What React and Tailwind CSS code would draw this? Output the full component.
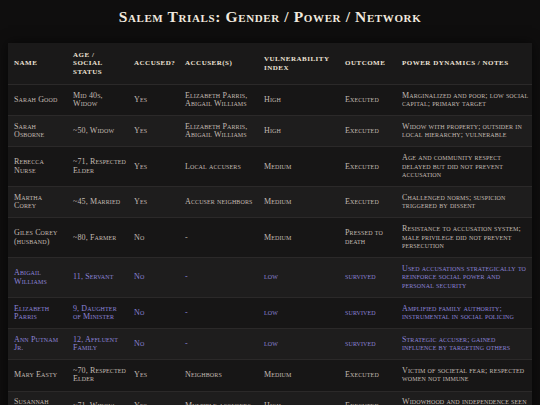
const rows = [
  ["Sarah Good", "Mid 40s, Widow", "Yes", "Elizabeth Parris, Abigail Williams", "High", "Executed", "Marginalized and poor; low social capital; primary target"],
  ["Sarah Osborne", "~50, Widow", "Yes", "Elizabeth Parris, Abigail Williams", "High", "Executed", "Widow with property; outsider in local hierarchy; vulnerable"],
  ["Rebecca Nurse", "~71, Respected Elder", "Yes", "Local accusers", "Medium", "Executed", "Age and community respect delayed but did not prevent accusation"],
  ["Martha Corey", "~45, Married", "Yes", "Accuser neighbors", "Medium", "Executed", "Challenged norms; suspicion triggered by dissent"],
  ["Giles Corey (husband)", "~80, Farmer", "No", "-", "Medium", "Pressed to death", "Resistance to accusation system; male privilege did not prevent persecution"],
  ["Abigail Williams", "11, Servant", "No", "-", "low", "survived", "Used accusations strategically to reinforce social power and personal security", true],
  ["Elizabeth Parris", "9, Daughter of Minister", "No", "-", "low", "survived", "Amplified family authority; instrumental in social policing", true],
  ["Ann Putnam Jr.", "12, Affluent Family", "No", "-", "low", "survived", "Strategic accuser; gained influence by targeting others", true],
  ["Mary Easty", "~70, Respected Elder", "Yes", "Neighbors", "Medium", "Executed", "Victim of societal fear; respected women not immune"],
  ["Susannah Martin", "~71, Widow", "Yes", "Multiple accusers", "High", "Executed", "Widowhood and independence seen as threat to order"],
];

const headers = ["Name", "Age / Social Status", "Accused?", "Accuser(s)", "Vulnerability Index", "Outcome", "Power Dynamics / Notes"];
const widths = ["w-[59px]", "w-[61px]", "w-[51px]", "w-[79px]", "w-[81px]", "w-[57px]", "w-[136px]"];

export default function App() {
  return (
    <div className="w-[540px] h-[405px] overflow-hidden bg-[#0f0e0e] px-2 font-['Liberation_Serif',serif]">
      <h1 className="h-[34px] mb-[9px] flex items-center justify-center text-[15.5px] font-bold tracking-[0.04em] text-[#f1e9df] [font-variant-caps:small-caps]">
        Salem Trials: Gender / Power / Network
      </h1>
      <table className="w-[524px] table-fixed border-collapse bg-[#1a1919] shadow-[0_0_12px_rgba(0,0,0,0.6)]">
        <colgroup>
          {widths.map((w, i) => (
            <col key={i} className={w} />
          ))}
        </colgroup>
        <thead>
          <tr className="border-b border-[#2b2929] bg-[#1a1919]">
            {headers.map((h) => (
              <th key={h} className="pl-[6px] pr-[3px] py-[7.5px] text-left align-middle text-[7px] leading-[8.7px] font-bold uppercase tracking-[0.07em] text-[#ece1d6]">
                {h}
              </th>
            ))}
          </tr>
        </thead>
        <tbody>
          {rows.map((r, i) => (
            <tr key={r[0]} className={`border-b border-[#2b2929] ${i % 2 === 1 ? "bg-[#1e1d1d]" : "bg-[#171616]"}`}>
              {r.slice(0, 7).map((c, j) => (
                <td
                  key={j}
                  className={`pl-[6px] pr-[2px] py-[6.5px] align-middle text-[8px] leading-[8.6px] tracking-[0.015em] [font-variant-caps:small-caps] ${r[7] ? "text-[#8a82d6]" : "text-[#c2bab2]"}`}
                >
                  {c}
                </td>
              ))}
            </tr>
          ))}
        </tbody>
      </table>
    </div>
  );
}
